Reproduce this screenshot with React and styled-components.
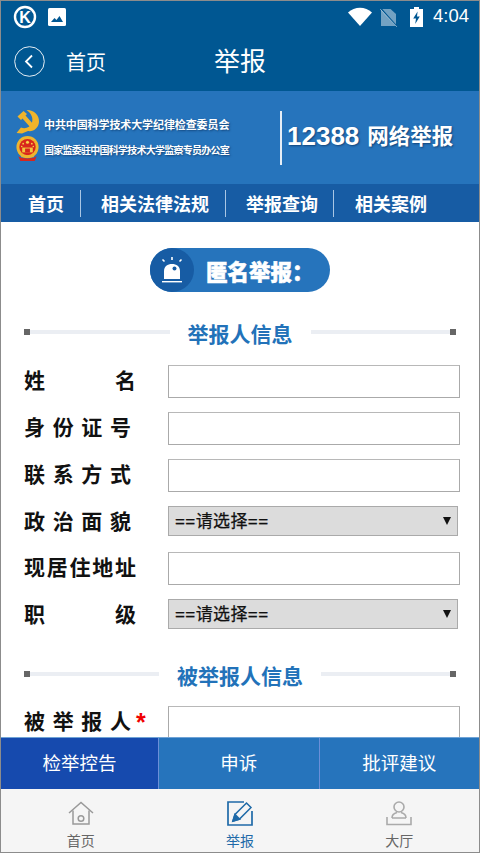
import React from 'react';
import styled, { createGlobalStyle } from 'styled-components';

const GlobalStyle = createGlobalStyle`
  html, body {
    margin: 0;
    padding: 0;
    background: #ffffff;
  }
  * {
    box-sizing: border-box;
  }
`;

const CJK = `"Liberation Sans", "Noto Sans CJK SC", sans-serif`;

const Page = styled.div`
  width: 480px;
  height: 853px;
  border: 1px solid #8c8c8c;
  display: flex;
  flex-direction: column;
  overflow: hidden;
  background: #ffffff;
  font-family: ${CJK};
`;

const TopArea = styled.div`
  height: 90px;
  background: #005792;
  color: #ffffff;
  flex-shrink: 0;
`;

const StatusBar = styled.div`
  height: 31px;
  display: flex;
  align-items: center;
  padding: 0 10px 0 12px;
`;

const StatusLeft = styled.div`
  display: flex;
  align-items: center;
  gap: 11px;
  flex: 1;
`;

const StatusRight = styled.div`
  display: flex;
  align-items: center;
`;

const Clock = styled.span`
  font-size: 18.5px;
  margin-left: 10px;
  line-height: 1;
`;

const TitleRow = styled.div`
  height: 59px;
  display: grid;
  grid-template-columns: 1fr auto 1fr;
  align-items: center;
`;

const BackLink = styled.div`
  display: flex;
  align-items: center;
  gap: 21px;
  font-size: 20px;
  padding-left: 13px;
`;

const PageTitle = styled.div`
  font-size: 26px;
  line-height: 1;
`;

const Banner = styled.div`
  height: 93px;
  background: #2674bc;
  display: flex;
  align-items: center;
  flex-shrink: 0;
  padding-left: 14px;
  color: #ffffff;
  text-shadow: 1px 1px 2px rgba(0, 30, 70, 0.55);
`;

const Emblems = styled.div`
  display: flex;
  flex-direction: column;
  align-items: center;
  gap: 2px;
  width: 25px;
  margin-bottom: 5px;
`;

const OrgNames = styled.div`
  display: flex;
  flex-direction: column;
  gap: 14px;
  width: 236px;
  margin-left: 4px;
  font-weight: 700;
  white-space: nowrap;
`;

const OrgName = styled.div`
  font-size: ${p => p.$size}px;
  letter-spacing: ${p => p.$spacing}px;
  line-height: 12px;
`;

const Hotline = styled.div`
  height: 54px;
  border-left: 2px solid #e6eef6;
  padding-left: 5px;
  display: flex;
  align-items: center;
  gap: 8px;
  font-weight: 700;
  white-space: nowrap;
`;

const HotlineNumber = styled.span`
  font-size: 26px;
  margin-bottom: 3px;
`;

const HotlineText = styled.span`
  font-size: 21.5px;
  margin-bottom: 6px;
`;

const NavBar = styled.div`
  height: 38px;
  background: #175ca4;
  display: flex;
  align-items: center;
  flex-shrink: 0;
`;

const NavItem = styled.div`
  height: 27px;
  display: flex;
  align-items: center;
  color: #ffffff;
  font-size: 18px;
  font-weight: 700;
  padding: 0 ${p => (p.$last ? 0 : p.$tight ? 15 : 16)}px 0 ${p => (p.$first ? 27 : p.$last ? 21 : 20)}px;
  border-right: ${p => (p.$last ? 'none' : '1px solid #a9c6e4')};
  white-space: nowrap;
`;

const Content = styled.div`
  flex: 1;
  min-height: 0;
  overflow: hidden;
  padding: 26px 23px 0;
`;

const Pill = styled.div`
  width: 180px;
  height: 44px;
  margin: 0 auto 32px;
  border-radius: 22px;
  background: #2674bc;
  display: flex;
  align-items: center;
  color: #ffffff;
  font-size: 21.5px;
  font-weight: 900;
  -webkit-text-stroke: 0.5px #ffffff;
`;

const PillIcon = styled.div`
  width: 44px;
  height: 44px;
  border-radius: 50%;
  background: #175ca4;
  display: flex;
  align-items: center;
  justify-content: center;
  margin-right: 12px;
`;

const Divider = styled.div`
  display: flex;
  align-items: center;
  height: 22px;
  margin-top: ${p => p.$before || 0}px;
  margin-bottom: ${p => p.$after}px;
`;

const DividerLine = styled.div`
  flex: 1;
  height: 4px;
  margin-bottom: 6px;
  background: #ebeef3;
  position: relative;

  &::after {
    content: '';
    position: absolute;
    top: -1px;
    ${p => (p.$right ? 'right: 0;' : 'left: 0;')}
    width: 6px;
    height: 6px;
    background: #666666;
  }
`;

const DividerText = styled.div`
  color: #2272b9;
  font-size: 21px;
  font-weight: 700;
  line-height: 22px;
  padding: 0 18px;
  white-space: nowrap;
`;

const Row = styled.div`
  display: flex;
  align-items: flex-start;
  margin-bottom: ${p => p.$gap || 14}px;
`;

const Label = styled.div`
  width: 144px;
  height: 33px;
  line-height: 32px;
  font-size: 21px;
  font-weight: 700;
  color: #111111;
  white-space: nowrap;
  display: flex;
  flex-shrink: 0;
`;

const LabelText = styled.span`
  display: block;
  width: ${p => p.$width}px;
  text-align: justify;
  text-align-last: justify;
`;

const Required = styled.span`
  color: #f00000;
  margin-left: 5px;
  font-size: 25px;
  line-height: 32px;
`;

const TextInput = styled.input`
  width: 292px;
  height: 33px;
  border: 1px solid #aaaaaa;
  border-top-color: #b8b8b8;
  background: #ffffff;
  border-radius: 0;
  padding: 0 6px;
  flex-shrink: 0;
`;

const SelectBox = styled.div`
  position: relative;
  width: 290px;
  height: 30px;
  flex-shrink: 0;
`;

const Select = styled.select`
  appearance: none;
  width: 100%;
  height: 100%;
  border: 1px solid #aaaaaa;
  border-radius: 0;
  background: #dcdcdc;
  color: #111111;
  font-family: ${CJK};
  font-size: 17px;
  letter-spacing: 0.4px;
  -webkit-text-stroke: 0.25px #111111;
  padding: 0 0 0 6px;
`;

const Caret = styled.span`
  position: absolute;
  top: 11px;
  right: 7px;
  width: 0;
  height: 0;
  border-left: 4px solid transparent;
  border-right: 4px solid transparent;
  border-top: 8px solid #111111;
`;

const ActionTabs = styled.div`
  height: 52px;
  display: flex;
  flex-shrink: 0;
  border-top: 1px solid #6fa3d6;
`;

const ActionTab = styled.div`
  flex: ${p => (p.$active ? '0 0 157px' : '1')};
  display: flex;
  align-items: center;
  justify-content: center;
  padding-bottom: 4px;
  background: ${p => (p.$active ? '#164aae' : '#2674bc')};
  color: #ffffff;
  font-size: 18.5px;
  border-left: ${p => (p.$active ? 'none' : '1px solid #6b8fd8')};
`;

const BottomBar = styled.div`
  height: 63px;
  display: flex;
  flex-shrink: 0;
  background: #f5f5f5;
`;

const BottomItem = styled.div`
  flex: 1;
  display: flex;
  flex-direction: column;
  align-items: center;
  padding-top: 12px;
  gap: 7px;
  font-size: 14px;
  line-height: 16px;
  color: ${p => (p.$active ? '#1f6aa8' : '#666666')};
`;

const KLogo = () => (
  <svg width="24" height="24" viewBox="0 0 24 24">
    <circle cx="12" cy="12" r="10" fill="none" stroke="#fff" strokeWidth="2.4" />
    <text x="12" y="17.5" fontSize="16" fontWeight="700" fontFamily="Liberation Sans" fill="#fff" textAnchor="middle">K</text>
  </svg>
);

const ImageIcon = () => (
  <svg width="18" height="18" viewBox="0 0 18 18">
    <rect width="18" height="18" rx="1.5" fill="#fff" />
    <path d="M3 14 L6.5 10 L8.5 12 L11.5 8 L15 14 Z" fill="#005792" />
  </svg>
);

const WifiIcon = () => (
  <svg width="24" height="19" viewBox="0 0 24 19">
    <path d="M0 5.5 C6.5 -0.8 17.5 -0.8 24 5.5 L12 19 Z" fill="#fff" />
  </svg>
);

const NoSimIcon = () => (
  <svg width="18" height="20" viewBox="0 0 18 20" style={{ marginLeft: 8 }}>
    <path d="M1 2 H10.5 L16 7 V19 H1 Z" fill="#fff" opacity="0.45" />
    <path d="M0.5 1 L17 19.5" stroke="#005792" strokeWidth="1.2" />
    <path d="M0 2 L17 20" stroke="#fff" strokeWidth="1" opacity="0.45" />
  </svg>
);

const BatteryIcon = () => (
  <svg width="13" height="20" viewBox="0 0 13 20" style={{ marginLeft: 12 }}>
    <path d="M4 0 H9 V2 H13 V20 H0 V2 H4 Z" fill="#fff" />
    <path d="M7.6 4.5 L3.2 11.5 H6 L5.2 17 L9.8 9.5 H7 Z" fill="#005792" />
  </svg>
);

const BackIcon = () => (
  <svg width="31" height="31" viewBox="0 0 31 31">
    <circle cx="15.5" cy="15.5" r="14.8" fill="none" stroke="#fff" strokeWidth="0.9" />
    <path d="M18 9.5 L12 15.5 L18 21.5" fill="none" stroke="#fff" strokeWidth="1.8" />
  </svg>
);

const PartyEmblem = () => (
  <svg width="25" height="25" viewBox="0 0 24 25">
    <path d="M11 1 C18 0.5 24 6 23.5 13 C23 19 18 23 12.5 22 L6.5 24.5 L1 24 L5.5 18.5 C10 20.5 15 18 16.5 13.5 C18 9 15.5 4 11 1 Z" fill="#f0b42a" />
    <path d="M2 7.5 L8 2 L11.5 5 L10 6.5 L18 15.5 L15 18.5 L7 9.5 L5.5 11 Z" fill="#f0b42a" />
  </svg>
);

const StateEmblem = () => (
  <svg width="25" height="26" viewBox="0 0 25 27">
    <circle cx="12.5" cy="11.5" r="11.5" fill="#eeb52f" />
    <circle cx="12.5" cy="11.5" r="8.5" fill="#d8261c" />
    <circle cx="12.5" cy="6.5" r="1.6" fill="#f6d34a" />
    <circle cx="8" cy="8" r="0.9" fill="#f6d34a" />
    <circle cx="17" cy="8" r="0.9" fill="#f6d34a" />
    <circle cx="6.5" cy="11" r="0.8" fill="#f6d34a" />
    <circle cx="18.5" cy="11" r="0.8" fill="#f6d34a" />
    <rect x="7" y="12" width="11" height="5" fill="#f2c63e" />
    <rect x="10" y="13" width="5" height="4" fill="#d8261c" />
    <path d="M3 21 C7 24 18 24 22 21 L20 26 H5 Z" fill="#d8261c" />
    <path d="M6 20 H19 V22 H6 Z" fill="#eeb52f" />
  </svg>
);

const AlarmIcon = () => (
  <svg width="26" height="26" viewBox="0 0 26 26">
    <path d="M5 22 V14 C5 9.5 8.5 7 13 7 C17.5 7 21 9.5 21 14 V22 Z" fill="#fff" />
    <circle cx="15.5" cy="11.5" r="2" fill="#175ca4" />
    <rect x="3" y="24" width="20" height="1.4" fill="#fff" />
    <path d="M13 0 V3 M3.5 2.5 L5.5 4.5 M22.5 2.5 L20.5 4.5" stroke="#fff" strokeWidth="1.6" />
  </svg>
);

const HomeIcon = () => (
  <svg width="26" height="25" viewBox="0 0 26 24" fill="none" stroke="#999999" strokeWidth="1.5">
    <path d="M1 11.5 L13 1 L25 11.5" />
    <path d="M5 9 V22.5 H21 V9" />
    <circle cx="13" cy="17" r="2.8" />
  </svg>
);

const ReportIcon = () => (
  <svg width="26" height="25" viewBox="0 0 26 25" fill="none" stroke="#1f6aa8" strokeWidth="1.7">
    <path d="M25 10 V24 H1 V1 H17" />
    <path d="M6 20 L8 13.5 L19.5 2 L24 6.5 L12.5 18 Z" strokeWidth="1.5" />
    <path d="M6 20 L8 13.5 L12.5 18 Z" fill="#1f6aa8" />
  </svg>
);

const HallIcon = () => (
  <svg width="26" height="25" viewBox="0 0 26 25" fill="none" stroke="#aaaaaa" strokeWidth="1.6">
    <circle cx="13" cy="6" r="5" />
    <path d="M6 17 C6 13 9 12 11 11.5 M20 17 C20 13 17 12 15 11.5 M6 17 H20" />
    <path d="M1 16 V23.5 H25 V16" />
  </svg>
);

const App = () => {
  return (
    <Page>
      <GlobalStyle />
      <TopArea>
        <StatusBar>
          <StatusLeft>
            <KLogo />
            <ImageIcon />
          </StatusLeft>
          <StatusRight>
            <WifiIcon />
            <NoSimIcon />
            <BatteryIcon />
            <Clock>4:04</Clock>
          </StatusRight>
        </StatusBar>
        <TitleRow>
          <BackLink>
            <BackIcon />
            首页
          </BackLink>
          <PageTitle>举报</PageTitle>
        </TitleRow>
      </TopArea>

      <Banner>
        <Emblems>
          <PartyEmblem />
          <StateEmblem />
        </Emblems>
        <OrgNames>
          <OrgName $size={11} $spacing={-0.1}>中共中国科学技术大学纪律检查委员会</OrgName>
          <OrgName $size={10} $spacing={-0.75}>国家监委驻中国科学技术大学监察专员办公室</OrgName>
        </OrgNames>
        <Hotline>
          <HotlineNumber>12388</HotlineNumber>
          <HotlineText>网络举报</HotlineText>
        </Hotline>
      </Banner>

      <NavBar>
        <NavItem $first>首页</NavItem>
        <NavItem>相关法律法规</NavItem>
        <NavItem $tight>举报查询</NavItem>
        <NavItem $last>相关案例</NavItem>
      </NavBar>

      <Content>
        <Pill>
          <PillIcon>
            <AlarmIcon />
          </PillIcon>
          匿名举报：
        </Pill>

        <Divider $after={19}>
          <DividerLine />
          <DividerText>举报人信息</DividerText>
          <DividerLine $right />
        </Divider>
        <Row>
          <Label><LabelText $width={112}>姓名</LabelText></Label>
          <TextInput />
        </Row>
        <Row>
          <Label><LabelText $width={107}>身份证号</LabelText></Label>
          <TextInput />
        </Row>
        <Row>
          <Label><LabelText $width={107}>联系方式</LabelText></Label>
          <TextInput />
        </Row>
        <Row $gap={13}>
          <Label><LabelText $width={107}>政治面貌</LabelText></Label>
          <SelectBox>
            <Select><option>==请选择==</option></Select>
            <Caret />
          </SelectBox>
        </Row>
        <Row>
          <Label><LabelText $width={112}>现居住地址</LabelText></Label>
          <TextInput />
        </Row>
        <Row>
          <Label><LabelText $width={112}>职级</LabelText></Label>
          <SelectBox>
            <Select><option>==请选择==</option></Select>
            <Caret />
          </SelectBox>
        </Row>

        <Divider $before={34} $after={18}>
          <DividerLine />
          <DividerText>被举报人信息</DividerText>
          <DividerLine $right />
        </Divider>
        <Row>
          <Label>
            <LabelText $width={107}>被举报人</LabelText>
            <Required>*</Required>
          </Label>
          <TextInput />
        </Row>
      </Content>

      <ActionTabs>
        <ActionTab $active>检举控告</ActionTab>
        <ActionTab>申诉</ActionTab>
        <ActionTab>批评建议</ActionTab>
      </ActionTabs>

      <BottomBar>
        <BottomItem>
          <HomeIcon />
          首页
        </BottomItem>
        <BottomItem $active>
          <ReportIcon />
          举报
        </BottomItem>
        <BottomItem>
          <HallIcon />
          大厅
        </BottomItem>
      </BottomBar>
    </Page>
  );
};

export default App;
